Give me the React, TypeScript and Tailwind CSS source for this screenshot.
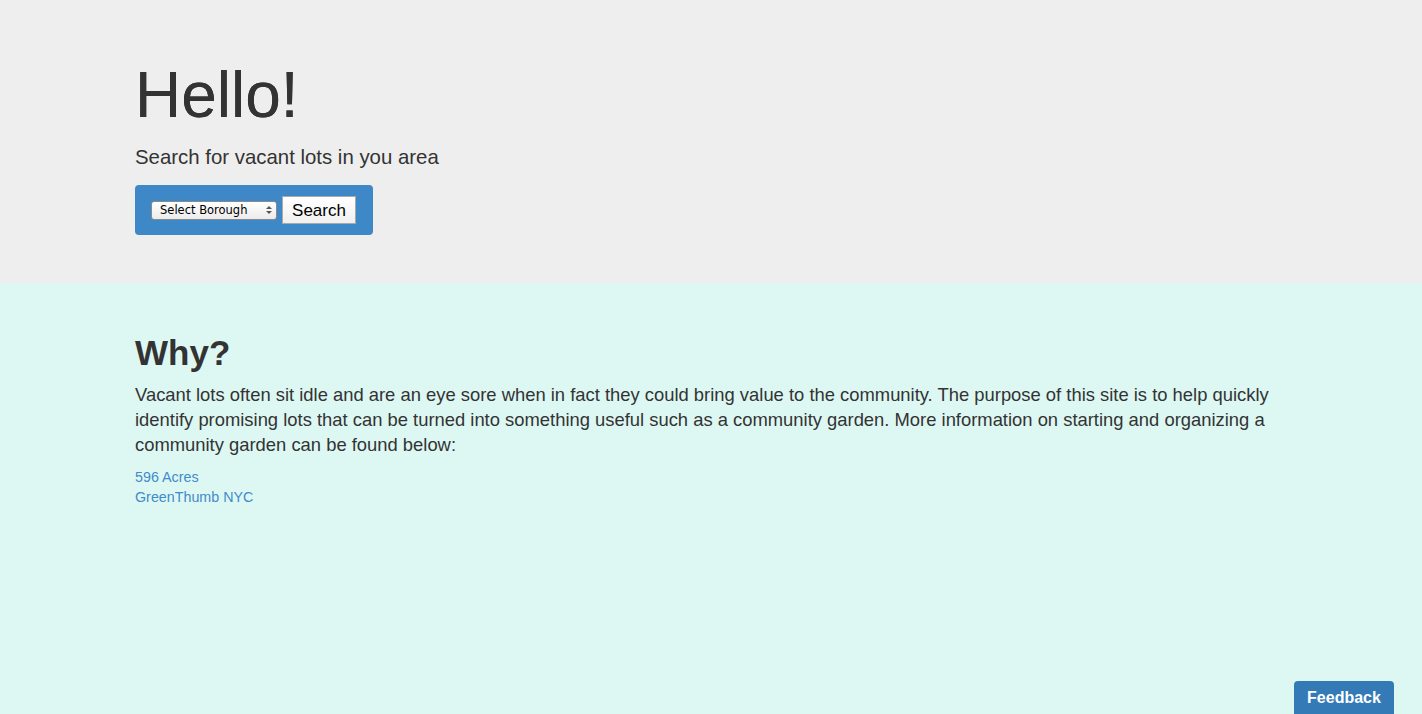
export default function App() {
  return (
    <div className="relative min-h-[714px] bg-[#ddf8f3] font-['Liberation_Sans',Arial,sans-serif] text-[#333333]">
      {/* Jumbotron */}
      <div className="h-[283px] bg-[#eeeeee] pt-[60px]">
        <div className="mx-auto w-[1152px]">
          <h1 className="text-[64px] leading-[1.1] [text-shadow:0_0_0.6px_#333]">Hello!</h1>
          <p className="mt-[12px] text-[20.4px] font-light leading-[30px]">
            Search for vacant lots in you area
          </p>
          <div className="mt-[13px] flex h-[50px] w-[238px] items-center gap-[5px] rounded-[4px] bg-[#3f88c8] pl-[16px]">
            <div className="flex h-[19px] w-[126px] items-center justify-between rounded-[3px] border border-[#8a8a8a] bg-gradient-to-b from-white to-[#ececec] pl-[8px] pr-[4px] font-['DejaVu_Sans',sans-serif] text-[11.5px] text-black">
              <span>Select Borough</span>
              <svg width="6" height="10" viewBox="0 0 6 10">
                <path d="M0 4 L3 1 L6 4 Z" fill="#555" />
                <path d="M0 6 L3 9 L6 6 Z" fill="#555" />
              </svg>
            </div>
            <button className="flex h-[28px] w-[74px] items-center justify-center border border-[#a9a9a9] bg-gradient-to-b from-white to-[#f0f0f0] text-[17px] text-black">
              Search
            </button>
          </div>
        </div>
      </div>

      {/* Why section */}
      <div className="mx-auto w-[1152px] pt-[50px]">
        <h2 className="text-[35px] font-bold leading-[40px]">Why?</h2>
        <p className="mt-[9px] w-[1150px] text-[18.4px] leading-[25px]">
          Vacant lots often sit idle and are an eye sore when in fact they could bring value to the community. The purpose of this site is to help quickly identify promising lots that can be turned into something useful such as a community garden. More information on starting and organizing a community garden can be found below:
        </p>
        <div className="mt-[10px] flex flex-col text-[14.3px] leading-[20px] text-[#428bca]">
          <a href="#">596 Acres</a>
          <a href="#">GreenThumb NYC</a>
        </div>
      </div>

      <button className="absolute bottom-0 right-[28px] h-[33px] w-[100px] rounded-t-[4px] bg-[#337ab7] text-[16px] font-bold text-white">
        Feedback
      </button>
    </div>
  );
}
